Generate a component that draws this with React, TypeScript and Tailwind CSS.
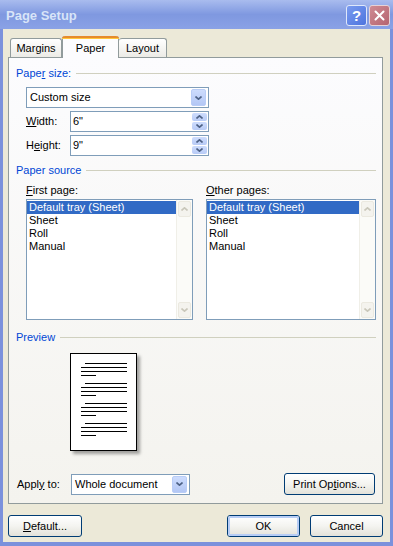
import React from "react";

const font = "font-['Liberation_Sans',Arial,sans-serif]";

const Chevron: React.FC<{ up?: boolean; color?: string; w?: number }> = ({ up, color = "#4d6185", w = 7 }) => (
  <svg width={w} height={4} viewBox="0 0 7 4" className="block">
    <path d={up ? "M0.5 3.5 L3.5 0.8 L6.5 3.5" : "M0.5 0.5 L3.5 3.2 L6.5 0.5"} fill="none" stroke={color} strokeWidth="1.6" />
  </svg>
);

const DropButton: React.FC = () => (
  <div className="w-[15px] h-[17px] rounded-[2px] border border-[#b9cdf7] bg-linear-to-b from-[#cddcfd] to-[#b3c7f5] flex items-center justify-center">
    <Chevron w={7} />
  </div>
);

const SpinButton: React.FC = () => (
  <div className="w-[15px] h-[17px] flex flex-col gap-px">
    <div className="flex-1 rounded-[2px] bg-linear-to-b from-[#cddcfd] to-[#b8cbf6] flex items-center justify-center">
      <Chevron up w={7} />
    </div>
    <div className="flex-1 rounded-[2px] bg-linear-to-b from-[#cddcfd] to-[#b8cbf6] flex items-center justify-center">
      <Chevron w={7} />
    </div>
  </div>
);

const GroupHeader: React.FC<{ children: React.ReactNode; className?: string }> = ({ children, className }) => (
  <div className={`flex items-center h-[13px] ${className ?? ""}`}>
    <span className="text-[#0046d5] whitespace-nowrap">{children}</span>
    <div className="flex-1 h-px bg-[#d0d0bf] ml-[5px]" />
  </div>
);

const ScrollBtn: React.FC<{ up?: boolean }> = ({ up }) => (
  <div className="h-[16px] rounded-[2px] border border-[#ebe9e0] bg-[#f4f3ee] flex items-center justify-center">
    <Chevron up={up} color="#c9c7ba" w={7} />
  </div>
);

const ListBox: React.FC<{ width: string }> = ({ width }) => (
  <div className={`${width} h-[121px] border border-[#7f9db9] bg-white flex`}>
    <div className="flex-1 pt-px">
      {["Default tray (Sheet)", "Sheet", "Roll", "Manual"].map((t, i) => (
        <div
          key={t}
          className={`h-[13px] leading-[13px] pl-[2px] ${i === 0 ? "bg-[#316ac5] text-white" : "text-black"}`}
        >
          {t}
        </div>
      ))}
    </div>
    <div className="w-[16px] bg-[#fbfbf8] border-l border-[#f0efe8] flex flex-col justify-between p-px">
      <ScrollBtn up />
      <ScrollBtn />
    </div>
  </div>
);

const XPButton: React.FC<{ children: React.ReactNode; className?: string; active?: boolean }> = ({ children, className, active }) => (
  <div
    className={`h-[22px] rounded-[3px] border border-[#003c74] bg-linear-to-b from-[#ffffff] via-[#f4f4f0] to-[#e3e2da] flex items-center justify-center text-black ${className ?? ""}`}
  >
    <div className={`w-full h-full rounded-[2px] flex items-center justify-center ${active ? "border-2 border-[#b7cdf5]" : ""}`}>
      {children}
    </div>
  </div>
);

const PreviewPage: React.FC = () => (
  <div className="w-[67px] h-[98px] bg-white border-[1.5px] border-black shadow-[3px_3px_3px_rgba(0,0,0,0.35)] pt-[9px] flex flex-col gap-[7px]">
    {[0, 1, 2, 3].map((g) => (
      <div key={g} className="flex flex-col gap-[3px]">
        <div className="h-px bg-black ml-[14px] mr-[9px]" />
        <div className="h-px bg-black ml-[10px] mr-[9px]" />
        <div className="h-px bg-black ml-[10px] mr-[9px]" />
        <div className="h-px bg-black ml-[10px] w-[15px]" />
      </div>
    ))}
  </div>
);

const App: React.FC = () => {
  return (
    <main className={`w-[393px] h-[546px] bg-[#7b91dc] flex flex-col text-[11px] leading-[13px] ${font}`}>
      <header className="h-[29px] shrink-0 bg-linear-to-b from-[#a9bcee] via-[#7f98e0] to-[#8aa2e6] flex items-center pl-[6px] pr-[3px]">
        <h1 className="text-[13px] font-bold text-[#d8e4f8] flex-1 mt-[1px]">Page Setup</h1>
        <div className="flex gap-[2px] mt-[1px]">
          <div className="w-[21px] h-[21px] rounded-[3px] border border-[#dfe8fb] bg-linear-to-br from-[#7a9bef] to-[#4e74de] flex items-center justify-center text-white font-bold text-[15px]">
            ?
          </div>
          <div className="w-[21px] h-[21px] rounded-[3px] border border-[#e6d2d6] bg-linear-to-br from-[#cf8b93] to-[#b56470] flex items-center justify-center">
            <svg width="11" height="11" viewBox="0 0 11 11">
              <path d="M1.5 1.5 L9.5 9.5 M9.5 1.5 L1.5 9.5" stroke="white" strokeWidth="2" strokeLinecap="round" />
            </svg>
          </div>
        </div>
      </header>

      <section className="flex-1 bg-[#ece9d8] ml-[3px] mr-[3px] mb-[4px] pl-[5px] pt-[7px] flex flex-col">
        {/* tabs */}
        <div className="flex items-end h-[21px] pl-[2px]">
          <div className="w-[52px] h-[19px] rounded-t-[3px] border border-b-0 border-[#919b9c] bg-linear-to-b from-white to-[#ecebe6] flex items-center justify-center pt-[1px]">
            Margins
          </div>
          <div className="relative z-10 w-[57px] h-[22px] -mb-px rounded-t-[3px] border-x border-[#919b9c] bg-[#fcfcfe] flex flex-col">
            <div className="h-[3px] rounded-t-[3px] bg-[#e68b2c] border-b border-[#ffc73c] -mx-px" />
            <div className="flex-1 flex items-center justify-center pb-[1px]">Paper</div>
          </div>
          <div className="w-[48px] h-[19px] rounded-t-[3px] border border-b-0 border-l-0 border-[#919b9c] bg-linear-to-b from-white to-[#ecebe6] flex items-center justify-center pt-[1px]">
            Layout
          </div>
        </div>

        {/* panel */}
        <div className="w-[375px] h-[447px] border border-[#919b9c] bg-linear-to-b from-[#fcfcfe] to-[#f4f3ee] pl-[7px] pr-[6px] pt-[9px]">
          <GroupHeader>
            Pape<u>r</u> size:
          </GroupHeader>

          <div className="ml-[10px] mt-[7px] w-[183px] h-[21px] border border-[#7f9db9] bg-white flex items-center justify-between pl-[3px] pr-[2px]">
            <span>Custom size</span>
            <DropButton />
          </div>

          <div className="flex items-center mt-[3px] ml-[10px]">
            <span className="w-[44px]">
              <u>W</u>idth:
            </span>
            <div className="w-[139px] h-[21px] border border-[#7f9db9] bg-white flex items-center justify-between pl-[2px] pr-[1px]">
              <span>6"</span>
              <SpinButton />
            </div>
          </div>

          <div className="flex items-center mt-[3px] ml-[10px]">
            <span className="w-[44px]">
              H<u>e</u>ight:
            </span>
            <div className="w-[139px] h-[21px] border border-[#7f9db9] bg-white flex items-center justify-between pl-[2px] pr-[1px]">
              <span>9"</span>
              <SpinButton />
            </div>
          </div>

          <GroupHeader className="mt-[8px]">Paper source</GroupHeader>

          <div className="flex mt-[7px] ml-[10px] gap-[13px]">
            <div className="flex flex-col gap-[2px]">
              <span className="h-[13px]">
                <u>F</u>irst page:
              </span>
              <ListBox width="w-[167px]" />
            </div>
            <div className="flex flex-col gap-[2px]">
              <span className="h-[13px]">
                <u>O</u>ther pages:
              </span>
              <ListBox width="w-[170px]" />
            </div>
          </div>

          <GroupHeader className="mt-[11px]">Preview</GroupHeader>

          <div className="ml-[54px] mt-[9px]">
            <PreviewPage />
          </div>

          <div className="flex items-center mt-[22px] ml-[1px]">
            <span className="w-[54px]">
              Appl<u>y</u> to:
            </span>
            <div className="w-[119px] h-[21px] border border-[#7f9db9] bg-white flex items-center justify-between pl-[3px] pr-[2px]">
              <span>Whole document</span>
              <DropButton />
            </div>
            <div className="flex-1" />
            <XPButton className="w-[91px] h-[21px] mr-[1px]">
              <span>
                Print Op<u>t</u>ions...
              </span>
            </XPButton>
          </div>
        </div>

        {/* bottom buttons */}
        <div className="flex items-center mt-[11px] pr-[7px]">
          <XPButton className="w-[74px]">
            <span>
              <u>D</u>efault...
            </span>
          </XPButton>
          <div className="flex-1" />
          <XPButton className="w-[73px]" active>
            OK
          </XPButton>
          <XPButton className="w-[73px] ml-[10px]">Cancel</XPButton>
        </div>
      </section>
    </main>
  );
};

export default App;
